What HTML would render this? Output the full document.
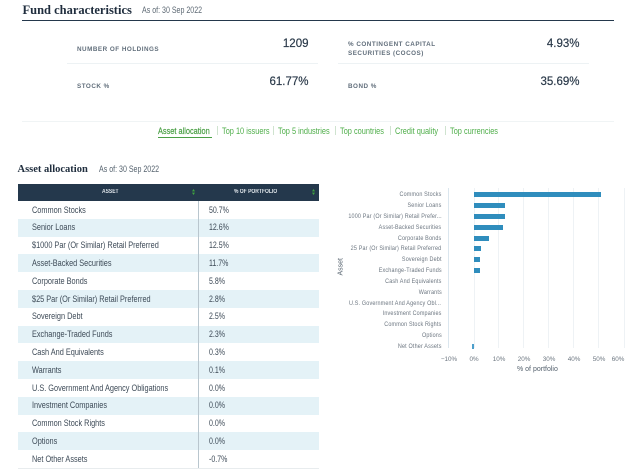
<!DOCTYPE html>
<html><head><meta charset="utf-8"><style>
html,body{margin:0;padding:0;background:#fff;width:640px;height:474px;overflow:hidden}
body{position:relative;font-family:"Liberation Sans",sans-serif;color:#2b3a4a}
.a{position:absolute;white-space:nowrap}
.t{font-family:"Liberation Serif",serif;font-weight:bold;color:#1f2d3d}
.as{font-size:9px;color:#55626e;transform:scaleX(.785);transform-origin:left}
.l{font-size:6.3px;font-weight:bold;letter-spacing:.5px;color:#616e7b;line-height:9px}
.v{font-size:11.5px;color:#2b3a4a;text-align:right;-webkit-text-stroke:.2px #2b3a4a}
.n{font-size:9px;color:#4fae4a;top:125.7px;transform:scaleX(.82);transform-origin:left}
.sep{position:absolute;top:126px;width:1px;height:9px;background:#cfe3cf}
.row{position:absolute;left:17.5px;width:301px;height:17.8px}
.row.b{background:#e4f2f7}
.row span{position:absolute;top:3.5px;font-size:9px;color:#3d4a57;white-space:nowrap;transform-origin:left}
.row span:first-child{left:14.5px;transform:scaleX(.815)}
.row span:last-child{left:191px;transform:scaleX(.78)}
.th{position:absolute;top:188.5px;font-size:6px;font-weight:bold;color:#dfe5ea;white-space:nowrap;transform:scaleX(.83);transform-origin:left}
.ar{position:absolute;width:3px;height:6px;top:189px;color:#3fa53f}
.cl{position:absolute;right:198.5px;font-size:6.8px;color:#6c7680;letter-spacing:.2px;white-space:nowrap;line-height:8px;transform:scaleX(.8);transform-origin:right}
.g{position:absolute;top:188px;width:1px;height:160px;background:#eef2f5}
.bar{position:absolute;height:5px;background:#2f8dbd;left:474px}
.x{position:absolute;top:356px;font-size:6.3px;color:#6c7680;white-space:nowrap;transform:translateX(-50%)}
</style></head><body>
<div class="a t" style="left:22.5px;top:3px;font-size:12.5px">Fund characteristics</div>
<div class="a as" style="left:142px;top:5px;color:#5c6873">As of: 30 Sep 2022</div>
<div class="a" style="left:22px;top:19.5px;width:592px;height:1.5px;background:#24384c"></div>

<div class="a l" style="left:77px;top:44.5px">NUMBER OF HOLDINGS</div>
<div class="a v" style="left:240px;width:68.5px;top:38px">1209</div>
<div class="a" style="left:67px;top:63px;width:251px;height:1px;background:#edf2f4"></div>
<div class="a l" style="left:77px;top:82px">STOCK %</div>
<div class="a v" style="left:240px;width:68.5px;top:76px">61.77%</div>

<div class="a l" style="left:348px;top:40px">% CONTINGENT CAPITAL<br>SECURITIES (COCOS)</div>
<div class="a v" style="left:510px;width:69.5px;top:38px">4.93%</div>
<div class="a" style="left:338px;top:63px;width:251px;height:1px;background:#edf2f4"></div>
<div class="a l" style="left:348px;top:82px">BOND %</div>
<div class="a v" style="left:510px;width:69.5px;top:76px">35.69%</div>

<div class="a" style="left:22px;top:121px;width:592px;height:1px;background:#f0f4f5"></div>
<div class="a n" style="left:158px;color:#4a9f45;-webkit-text-stroke:.2px #4a9f45">Asset allocation</div>
<div class="a" style="left:158px;top:137px;width:54px;height:1px;background:#4a9f45"></div>
<div class="sep" style="left:217px"></div>
<div class="a n" style="left:222px">Top 10 issuers</div>
<div class="sep" style="left:273px"></div>
<div class="a n" style="left:278px">Top 5 industries</div>
<div class="sep" style="left:335px"></div>
<div class="a n" style="left:340px">Top countries</div>
<div class="sep" style="left:390px"></div>
<div class="a n" style="left:395px">Credit quality</div>
<div class="sep" style="left:445px"></div>
<div class="a n" style="left:450px">Top currencies</div>

<div class="a t" style="left:17.5px;top:163.5px;font-size:10.5px">Asset allocation</div>
<div class="a as" style="left:99px;top:164px">As of: 30 Sep 2022</div>

<div class="a" style="left:17.5px;top:184px;width:301px;height:17px;background:#24384c"></div>
<div class="th" style="left:102px">ASSET</div>
<div class="th" style="left:234px">% OF PORTFOLIO</div>
<svg class="ar" style="left:192px" viewBox="0 0 3 6"><path d="M1.5 0L3 2.4H0zM1.5 6L0 3.6H3z" fill="#3fa53f"/></svg>
<svg class="ar" style="left:312px" viewBox="0 0 3 6"><path d="M1.5 0L3 2.4H0zM1.5 6L0 3.6H3z" fill="#3fa53f"/></svg>

<div class="row" style="top:201px"><span>Common Stocks</span><span>50.7%</span></div>
<div class="row b" style="top:218.8px"><span>Senior Loans</span><span>12.6%</span></div>
<div class="row" style="top:236.6px"><span>$1000 Par (Or Similar) Retail Preferred</span><span>12.5%</span></div>
<div class="row b" style="top:254.4px"><span>Asset-Backed Securities</span><span>11.7%</span></div>
<div class="row" style="top:272.2px"><span>Corporate Bonds</span><span>5.8%</span></div>
<div class="row b" style="top:290px"><span>$25 Par (Or Similar) Retail Preferred</span><span>2.8%</span></div>
<div class="row" style="top:307.8px"><span>Sovereign Debt</span><span>2.5%</span></div>
<div class="row b" style="top:325.6px"><span>Exchange-Traded Funds</span><span>2.3%</span></div>
<div class="row" style="top:343.4px"><span>Cash And Equivalents</span><span>0.3%</span></div>
<div class="row b" style="top:361.2px"><span>Warrants</span><span>0.1%</span></div>
<div class="row" style="top:379px"><span>U.S. Government And Agency Obligations</span><span>0.0%</span></div>
<div class="row b" style="top:396.8px"><span>Investment Companies</span><span>0.0%</span></div>
<div class="row" style="top:414.6px"><span>Common Stock Rights</span><span>0.0%</span></div>
<div class="row b" style="top:432.4px"><span>Options</span><span>0.0%</span></div>
<div class="row" style="top:450.2px"><span>Net Other Assets</span><span>-0.7%</span></div>
<div class="a" style="left:198px;top:201px;width:1px;height:267px;background:#b9c6ce"></div>
<div class="a" style="left:17.5px;top:468px;width:301px;height:1px;background:#e8ecee"></div>

<div class="g" style="left:448px;background:#dbe6ee"></div>
<div class="g" style="left:474px"></div>
<div class="g" style="left:498px"></div>
<div class="g" style="left:523px"></div>
<div class="g" style="left:548px"></div>
<div class="g" style="left:573px"></div>
<div class="g" style="left:598px"></div>
<div class="g" style="left:624px"></div>

<div class="bar" style="top:192.2px;width:126.5px"></div>
<div class="bar" style="top:203px;width:31px"></div>
<div class="bar" style="top:213.9px;width:31px"></div>
<div class="bar" style="top:224.7px;width:29px"></div>
<div class="bar" style="top:235.5px;width:14.5px"></div>
<div class="bar" style="top:246.4px;width:7px"></div>
<div class="bar" style="top:257.2px;width:6px"></div>
<div class="bar" style="top:268px;width:5.5px"></div>
<div class="bar" style="top:343.8px;left:472px;width:2px;background:#4d9fcb"></div>

<div class="cl" style="top:191.2px">Common Stocks</div>
<div class="cl" style="top:202px">Senior Loans</div>
<div class="cl" style="top:212.9px">1000 Par (Or Similar) Retail Prefer...</div>
<div class="cl" style="top:223.7px">Asset-Backed Securities</div>
<div class="cl" style="top:234.5px">Corporate Bonds</div>
<div class="cl" style="top:245.4px">25 Par (Or Similar) Retail Preferred</div>
<div class="cl" style="top:256.2px">Sovereign Debt</div>
<div class="cl" style="top:267px">Exchange-Traded Funds</div>
<div class="cl" style="top:277.9px">Cash And Equivalents</div>
<div class="cl" style="top:288.7px">Warrants</div>
<div class="cl" style="top:299.5px">U.S. Government And Agency Obl...</div>
<div class="cl" style="top:310.4px">Investment Companies</div>
<div class="cl" style="top:321.2px">Common Stock Rights</div>
<div class="cl" style="top:332px">Options</div>
<div class="cl" style="top:342.8px">Net Other Assets</div>

<div class="a" style="left:333.5px;top:265px;font-size:7px;color:#55626e;transform:rotate(-90deg);transform-origin:center;width:14px;text-align:center">Asset</div>

<div class="x" style="left:449px">−10%</div>
<div class="x" style="left:474px">0%</div>
<div class="x" style="left:499px">10%</div>
<div class="x" style="left:524px">20%</div>
<div class="x" style="left:549px">30%</div>
<div class="x" style="left:574px">40%</div>
<div class="x" style="left:599px">50%</div>
<div class="x" style="left:618px">60%</div>
<div class="a" style="left:517px;top:366px;font-size:7px;color:#55626e">% of portfolio</div>
</body></html>
